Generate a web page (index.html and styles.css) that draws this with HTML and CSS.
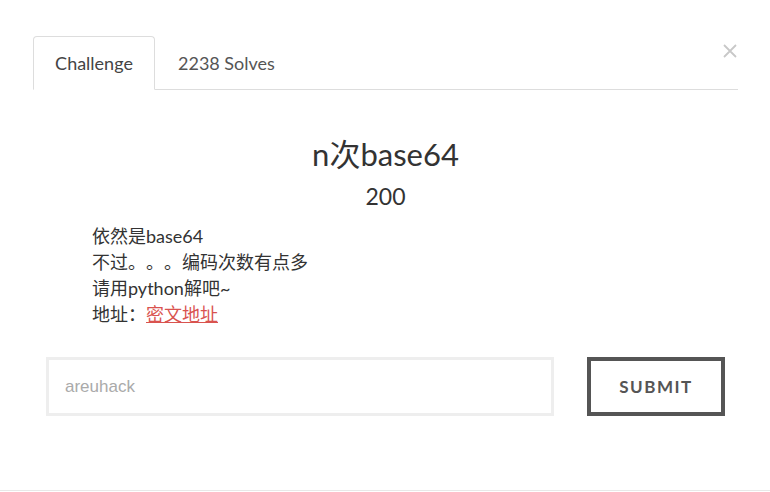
FILE: index.html
```html
<!DOCTYPE html>
<html lang="zh">
<head>
<meta charset="utf-8">
<title>Challenge</title>
<link rel="stylesheet" href="styles.css">
</head>
<body>
<div class="modal">
  <button class="close" aria-label="Close">
    <svg width="14" height="14" viewBox="0 0 14 14"><path d="M1 1L13 13M13 1L1 13" stroke="#c8c8c8" stroke-width="1.8" fill="none"/></svg>
  </button>
  <ul class="tabs">
    <li class="tab active">Challenge</li>
    <li class="tab">2238 Solves</li>
  </ul>
  <div class="body">
    <h3 class="name">n次base64</h3>
    <h4 class="value">200</h4>
    <div class="desc">
      <p>依然是base64</p>
      <p>不过。。。编码次数有点多</p>
      <p>请用python解吧~</p>
      <p>地址：<a href="#">密文地址</a></p>
    </div>
    <form class="answer">
      <input class="flag" type="text" placeholder="areuhack">
      <button class="submit" type="button">Submit</button>
    </form>
  </div>
  <div class="footer"></div>
</div>
</body>
</html>
```
FILE: styles.css
```css
* { box-sizing: border-box; }
html, body { margin: 0; padding: 0; background: #fff; }
body {
  font-family: Lato, "Noto Sans CJK SC", sans-serif;
  color: #333;
  width: 770px;
  height: 492px;
  overflow: hidden;
  text-spacing-trim: space-all;
}
.modal {
  position: relative;
  height: 492px;
  padding: 36px 32px 0 33px;
  display: flex;
  flex-direction: column;
}
.close {
  position: absolute;
  top: 44px;
  left: 723px;
  border: 0;
  background: none;
  padding: 0;
  width: 14px;
  height: 14px;
  line-height: 0;
}
.tabs {
  list-style: none;
  margin: 0;
  padding: 0;
  display: flex;
  border-bottom: 1px solid #ddd;
  height: 54px;
}
.tab {
  font-size: 18px;
  color: #555;
  padding: 0 21px 0 21px;
  line-height: 52px;
  border: 1px solid transparent;
  border-top-left-radius: 4px;
  border-top-right-radius: 4px;
  margin-bottom: -1px;
  height: 54px;
}
.tab.active {
  color: #444;
  border-color: #ddd #ddd #fff;
  background: #fff;
  width: 122px;
  text-align: center;
  padding: 0;
}
.tab + .tab { padding-left: 22px; }
.body {
  padding: 0 13px;
  flex: 1;
}
.name {
  font-weight: 400;
  font-size: 31px;
  text-align: center;
  margin: 44px 0 0;
  line-height: 40px;
  color: #333;
}
.value {
  font-weight: 400;
  font-size: 23px;
  text-align: center;
  margin: 7px 0 0;
  line-height: 30px;
  color: #333;
}
.desc {
  margin: 12px 0 0 46px;
  font-size: 18px;
  line-height: 26px;
  color: #333;
}
.desc p { margin: 0; }
.desc a { color: #d9534f; text-decoration: underline; }
.answer {
  display: flex;
  justify-content: space-between;
  margin-top: 30px;
}
.flag {
  width: 508px;
  height: 59px;
  border: 3px solid #eee;
  padding: 0 16px;
  font-family: "Liberation Sans", Arial, sans-serif;
  font-size: 17px;
  color: #333;
  outline: none;
  background: #fff;
}
.flag::placeholder { color: #aaa; }
.submit {
  width: 138px;
  height: 59px;
  border: 4px solid #555;
  background: #fff;
  color: #555;
  font-family: Lato, sans-serif;
  font-weight: 700;
  font-size: 17px;
  letter-spacing: 1.5px;
  text-transform: uppercase;
}
.footer {
  position: absolute;
  left: 0;
  right: 0;
  bottom: 0;
  height: 2px;
  border-top: 1px solid #e8e8e8;
}
```
